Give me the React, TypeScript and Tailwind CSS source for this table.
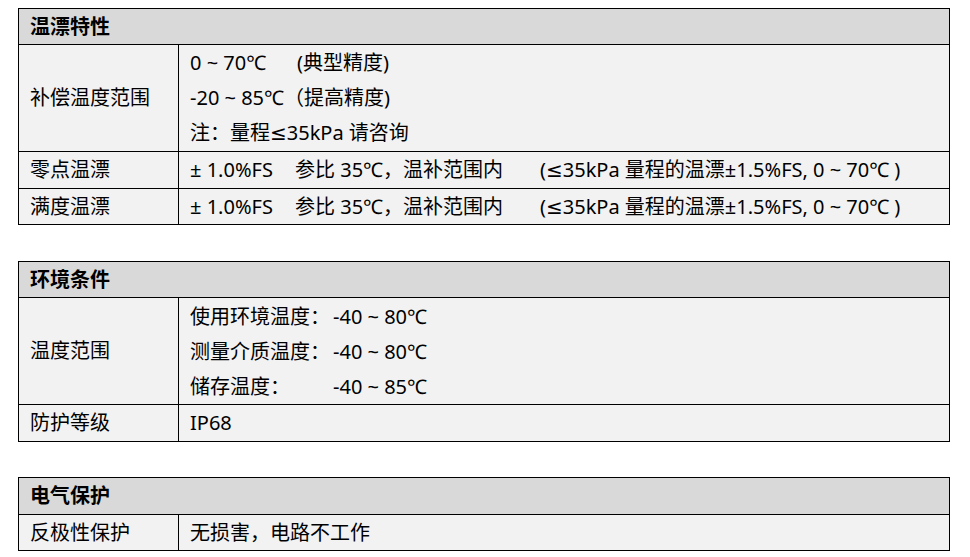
const font = { fontFamily: '"Noto Sans", "Noto Sans CJK SC", sans-serif' };
const sym = { fontFamily: '"DejaVu Sans", sans-serif' };

function Le() {
  return <span style={sym}>≤</span>;
}

function Header({ title, h = "h-[36px]" }: { title: string; h?: string }) {
  return (
    <div className={`flex items-center border-b border-black bg-[#d9d9d9] pl-[11px] text-[20px] font-bold ${h}`}>
      {title}
    </div>
  );
}

function Row({ label, last, h, children }: { label: string; last?: boolean; h: string; children: React.ReactNode }) {
  return (
    <div className={`grid grid-cols-[160px_1fr] bg-[#f2f2f2] ${last ? "" : "border-b border-black"} ${h}`}>
      <div className="flex items-center border-r border-black pl-[11px]">{label}</div>
      <div className="flex flex-col justify-center pl-[11px]">{children}</div>
    </div>
  );
}

function Drift() {
  return (
    <div className="flex">
      <span className="w-[105px]">± 1.0%FS</span>
      <span className="w-[245px]">参比 35℃，温补范围内</span>
      <span>
        (<Le />35kPa 量程的温漂±1.5%FS, 0 ~ 70℃ )
      </span>
    </div>
  );
}

export default function App() {
  return (
    <div className="min-h-[557px] bg-white pt-[8px] text-[20px] leading-[28px] text-black" style={font}>
      <div className="ml-[18px] w-[932px] border border-black">
        <Header title="温漂特性" />
        <Row label="补偿温度范围" h="h-[107px]">
          <div className="leading-[35px]">
            <span className="inline-block w-[107px]">0 ~ 70℃</span>(典型精度)
          </div>
          <div className="leading-[35px]">-20 ~ 85℃（提高精度)</div>
          <div className="leading-[35px]">
            注：量程<Le />35kPa 请咨询
          </div>
        </Row>
        <Row label="零点温漂" h="h-[37px]">
          <Drift />
        </Row>
        <Row label="满度温漂" h="h-[35px]" last>
          <Drift />
        </Row>
      </div>

      <div className="ml-[18px] mt-[36px] w-[932px] border border-black">
        <Header title="环境条件" />
        <Row label="温度范围" h="h-[107px]">
          <div className="flex leading-[35px]">
            <span className="w-[143px]">使用环境温度：</span>-40 ~ 80℃
          </div>
          <div className="flex leading-[35px]">
            <span className="w-[143px]">测量介质温度：</span>-40 ~ 80℃
          </div>
          <div className="flex leading-[35px]">
            <span className="w-[143px]">储存温度：</span>-40 ~ 85℃
          </div>
        </Row>
        <Row label="防护等级" h="h-[36px]" last>
          <div>IP68</div>
        </Row>
      </div>

      <div className="ml-[18px] mt-[35px] w-[932px] border border-black">
        <Header title="电气保护" h="h-[37px]" />
        <Row label="反极性保护" h="h-[35px]" last>
          <div>无损害，电路不工作</div>
        </Row>
      </div>
    </div>
  );
}
